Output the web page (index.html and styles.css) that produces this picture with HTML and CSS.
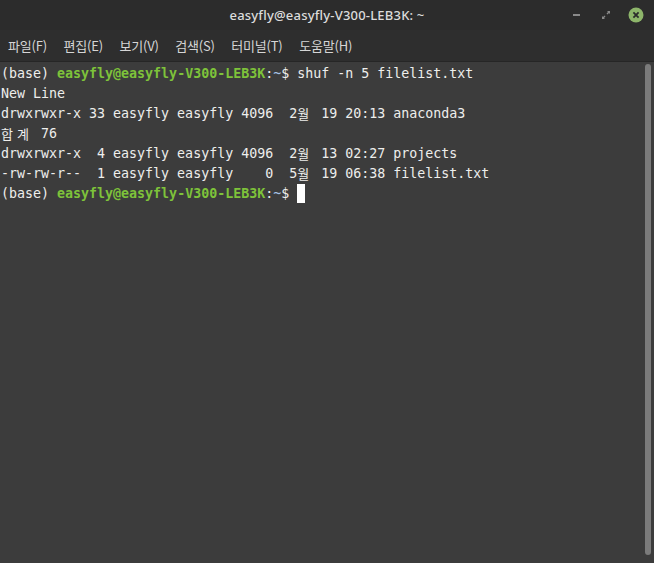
FILE: index.html
```html
<!DOCTYPE html>
<html lang="ko">
<head>
<meta charset="utf-8">
<title>easyfly@easyfly-V300-LEB3K: ~</title>
<link rel="stylesheet" href="styles.css">
</head>
<body>
<div class="window">
  <header class="titlebar">
    <div class="spacer"></div>
    <div class="title">easyfly@easyfly-V300-LEB3K: ~</div>
    <div class="controls">
      <svg class="btn" width="16" height="16" viewBox="0 0 16 16"><rect x="4" y="7" width="7" height="2" fill="#8a8a8a"/></svg>
      <svg class="btn" width="16" height="16" viewBox="0 0 16 16"><path d="M9 4h3v3z M4 12v-3l3 3z" fill="#8a8a8a"/><path d="M11 5l-2 2 M5 11l2-2" stroke="#8a8a8a" stroke-width="1.4"/></svg>
      <svg class="btn close" width="18" height="18" viewBox="0 0 18 18"><circle cx="9" cy="9" r="7.5" fill="#8db56a"/><path d="M6.4 6.4l5.2 5.2M11.6 6.4l-5.2 5.2" stroke="#2b2b2b" stroke-width="1.8"/></svg>
    </div>
  </header>
  <nav class="menubar">
    <span class="item">파일(F)</span>
    <span class="item">편집(E)</span>
    <span class="item">보기(V)</span>
    <span class="item">검색(S)</span>
    <span class="item">터미널(T)</span>
    <span class="item">도움말(H)</span>
  </nav>
  <main class="terminal">
    <div class="screen">
      <div class="line">(base) <b class="user">easyfly@easyfly-V300-LEB3K</b>:<b class="path">~</b>$ shuf -n 5 filelist.txt</div>
      <div class="line">New Line</div>
      <div class="line">drwxrwxr-x 33 easyfly easyfly 4096  2<span class="wide">월</span> 19 20:13 anaconda3</div>
      <div class="line"><span class="wide">합</span><span class="wide">계</span> 76</div>
      <div class="line">drwxrwxr-x  4 easyfly easyfly 4096  2<span class="wide">월</span> 13 02:27 projects</div>
      <div class="line">-rw-rw-r--  1 easyfly easyfly    0  5<span class="wide">월</span> 19 06:38 filelist.txt</div>
      <div class="line">(base) <b class="user">easyfly@easyfly-V300-LEB3K</b>:<b class="path">~</b>$ <span class="cursor"></span></div>
    </div>
    <div class="scrollbar"><div class="thumb"></div></div>
  </main>
</div>
</body>
</html>
```

FILE: styles.css
```css
html, body {
  margin: 0;
  padding: 0;
  background: #3c3c3c;
}

.window {
  width: 654px;
  height: 563px;
  display: flex;
  flex-direction: column;
  overflow: hidden;
}

.titlebar {
  height: 30px;
  background: #2c2c2c;
  display: grid;
  grid-template-columns: 1fr auto 1fr;
  align-items: center;
}

.title {
  font-family: "Noto Sans", sans-serif;
  font-size: 13px;
  font-weight: 500;
  letter-spacing: 0.2px;
  color: #dcdcdc;
}

.controls {
  justify-self: end;
  display: flex;
  align-items: center;
  gap: 13px;
  padding-right: 9px;
}

.btn { display: block; }

.menubar {
  height: 32px;
  background: #2e2e2e;
  border-bottom: 1px solid #262626;
  display: flex;
  align-items: center;
  gap: 16.6px;
  padding-left: 8px;
  box-sizing: border-box;
}

.item {
  font-family: "Noto Sans CJK KR", "Noto Sans", sans-serif;
  font-size: 13px;
  letter-spacing: -0.2px;
  color: #d6d6d6;
}

.terminal {
  flex: 1;
  display: flex;
  background: #3c3c3c;
  min-height: 0;
}

.screen {
  flex: 1;
  padding: 2px 0 0 1px;
  font-family: "DejaVu Sans Mono", "Noto Sans CJK KR", monospace;
  font-size: 13.3px;
  line-height: 20px;
  color: #eeeeec;
}

.line {
  height: 20px;
  white-space: pre;
}

.user { color: #7ec33a; font-weight: bold; }
.path { color: #a6c2e4; font-weight: normal; }

.wide {
  display: inline-block;
  width: 16px;
  text-align: left;
  font-family: "Noto Sans CJK KR", sans-serif;
  font-size: 13px;
  line-height: 20px;
  vertical-align: top;
}

.cursor {
  display: inline-block;
  width: 8px;
  height: 19px;
  background: #ffffff;
  vertical-align: top;
}

.scrollbar {
  width: 15px;
  padding: 2px 3px 8px 6px;
  box-sizing: border-box;
  display: flex;
}

.thumb {
  flex: 1;
  background: #7b7b7b;
  border-radius: 3px;
}
```
